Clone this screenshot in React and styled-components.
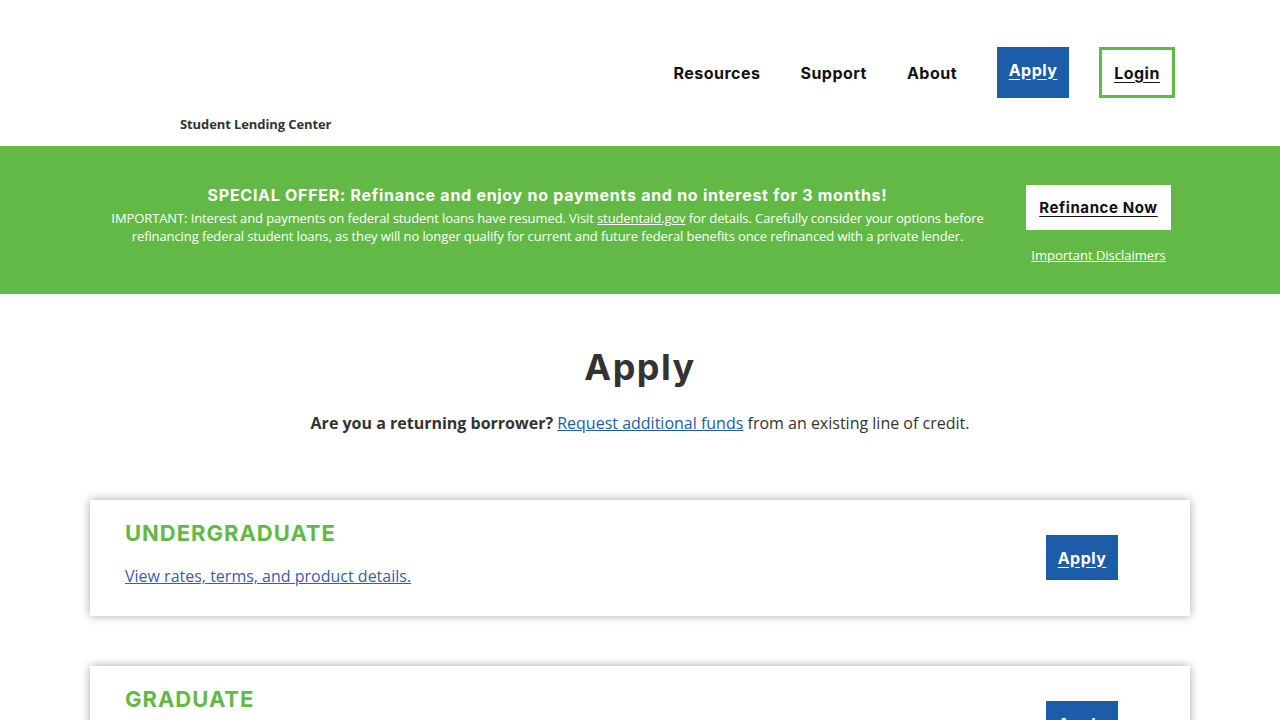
import styled, { createGlobalStyle } from "styled-components";

const GlobalStyle = createGlobalStyle`
  body {
    margin: 0;
    font-family: "Open Sans", "Liberation Sans", sans-serif;
    color: #333;
    background: #fff;
  }
  * { box-sizing: border-box; }
`;

const HEAD = `"Inter", "Liberation Sans", sans-serif`;
const GREEN = "#62b946";
const BLUE = "#1c5ca9";

const Header = styled.header`
  height: 146px;
  display: flex;
  justify-content: space-between;
  padding: 0 105px 0 180px;
`;

const Brand = styled.div`
  display: flex;
  flex-direction: column;
  justify-content: flex-end;
  padding-bottom: 13px;
  font-size: 13px;
  font-weight: 700;
  letter-spacing: -0.1px;
  color: #333;
`;

const Nav = styled.nav`
  display: flex;
  align-items: center;
  margin-top: 47px;
  height: 51px;
`;

const NavLink = styled.a`
  font-family: ${HEAD};
  font-weight: 700;
  font-size: 16px;
  letter-spacing: 0.03em;
  color: #111;
  text-decoration: none;
  margin-right: 40px;
`;

const NavButton = styled.a`
  font-family: ${HEAD};
  font-weight: 700;
  font-size: 16px;
  letter-spacing: 0.03em;
  height: 51px;
  display: flex;
  align-items: center;
  justify-content: center;
  text-decoration: underline;
  text-underline-offset: 3px;
  ${(p) =>
    p.$outline
      ? `border: 3px solid ${GREEN}; color: #111; width: 76px;`
      : `background: ${BLUE}; color: #fff; width: 72px; margin-right: 30px; padding-bottom: 6px;`}
`;

const Banner = styled.section`
  height: 148px;
  background: ${GREEN};
  display: flex;
  align-items: flex-start;
  padding: 38px 109px 0 100px;
  color: #fff;
`;

const Offer = styled.div`
  flex: 1;
  text-align: center;
`;

const OfferTitle = styled.div`
  font-family: ${HEAD};
  font-weight: 700;
  font-size: 16px;
  line-height: 22px;
  letter-spacing: 0.045em;
`;

const OfferText = styled.p`
  margin: 3px 0 0;
  font-size: 13px;
  line-height: 18px;
  letter-spacing: -0.1px;
  a { color: #fff; }
`;

const OfferSide = styled.div`
  width: 145px;
  margin-left: 31px;
  margin-top: 1px;
  display: flex;
  flex-direction: column;
  align-items: center;
`;

const RefiButton = styled.a`
  width: 145px;
  height: 45px;
  background: #fff;
  color: #111;
  font-family: ${HEAD};
  font-weight: 700;
  font-size: 15px;
  letter-spacing: 0.04em;
  display: flex;
  align-items: center;
  justify-content: center;
  text-decoration: underline;
  text-underline-offset: 3px;
`;

const Disclaimer = styled.a`
  margin-top: 16px;
  font-size: 13px;
  line-height: 18px;
  color: #fff;
`;

const Main = styled.main`
  padding: 51px 90px 0;
`;

const Title = styled.h1`
  margin: 0;
  text-align: center;
  font-family: ${HEAD};
  font-weight: 700;
  font-size: 36px;
  line-height: 44px;
  letter-spacing: 0.04em;
  color: #333;
`;

const Lead = styled.p`
  margin: 22px 0 65px;
  text-align: center;
  font-size: 16px;
  line-height: 24px;
  b { font-weight: 700; }
  a { color: ${BLUE}; }
`;

const Cards = styled.div`
  display: flex;
  flex-direction: column;
  gap: 50px;
`;

const Card = styled.div`
  display: flex;
  align-items: center;
  justify-content: space-between;
  background: #fff;
  box-shadow: 0 0 9px rgba(0, 0, 0, 0.35);
  padding: 19px 72px 29px 35px;
`;

const CardTitle = styled.h2`
  margin: 0 0 18px;
  font-family: ${HEAD};
  font-weight: 700;
  font-size: 22px;
  line-height: 28px;
  letter-spacing: 0.045em;
  color: ${GREEN};
`;

const CardLink = styled.a`
  font-size: 16px;
  line-height: 22px;
  color: #3a5ca6;
`;

const CardButton = styled.a`
  width: 72px;
  height: 45px;
  margin-top: 9px;
  background: ${BLUE};
  color: #fff;
  font-family: ${HEAD};
  font-weight: 700;
  font-size: 16px;
  letter-spacing: 0.03em;
  display: flex;
  align-items: center;
  justify-content: center;
  text-decoration: underline;
  text-underline-offset: 3px;
`;

const products = ["UNDERGRADUATE", "GRADUATE"];

export default function App() {
  return (
    <>
      <GlobalStyle />
      <Header>
        <Brand>Student Lending Center</Brand>
        <Nav>
          <NavLink href="#">Resources</NavLink>
          <NavLink href="#">Support</NavLink>
          <NavLink href="#">About</NavLink>
          <NavButton href="#">Apply</NavButton>
          <NavButton href="#" $outline>
            Login
          </NavButton>
        </Nav>
      </Header>
      <Banner>
        <Offer>
          <OfferTitle>
            SPECIAL OFFER: Refinance and enjoy no payments and no interest for 3 months!
          </OfferTitle>
          <OfferText>
            IMPORTANT: Interest and payments on federal student loans have resumed. Visit{" "}
            <a href="#">studentaid.gov</a> for details. Carefully consider your options before
            <br />
            refinancing federal student loans, as they will no longer qualify for current and
            future federal benefits once refinanced with a private lender.
          </OfferText>
        </Offer>
        <OfferSide>
          <RefiButton href="#">Refinance Now</RefiButton>
          <Disclaimer href="#">Important Disclaimers</Disclaimer>
        </OfferSide>
      </Banner>
      <Main>
        <Title>Apply</Title>
        <Lead>
          <b>Are you a returning borrower?</b> <a href="#">Request additional funds</a> from an
          existing line of credit.
        </Lead>
        <Cards>
          {products.map((name) => (
            <Card key={name}>
              <div>
                <CardTitle>{name}</CardTitle>
                <CardLink href="#">View rates, terms, and product details.</CardLink>
              </div>
              <CardButton href="#">Apply</CardButton>
            </Card>
          ))}
        </Cards>
      </Main>
    </>
  );
}
